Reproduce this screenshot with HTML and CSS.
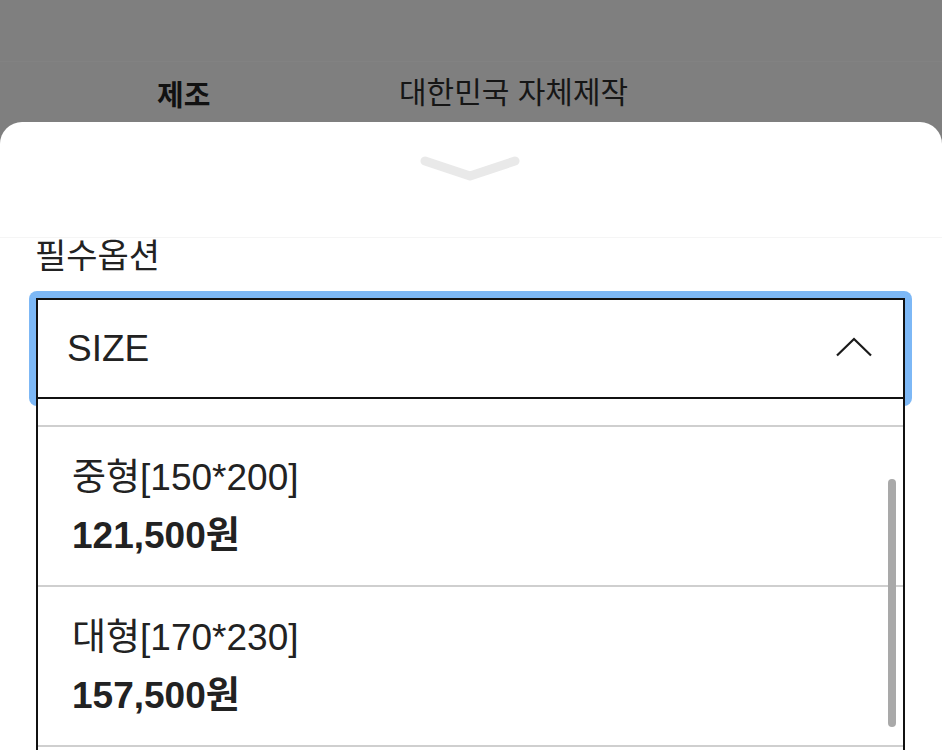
FILE: index.html
```html
<!DOCTYPE html>
<html lang="ko">
<head>
<meta charset="utf-8">
<title>필수옵션</title>
<link rel="stylesheet" href="styles.css">
</head>
<body>
  <div class="backdrop">
    <div class="spec-row">
      <div class="spec-key">제조</div>
      <div class="spec-val">대한민국 자체제작</div>
    </div>
  </div>
  <div class="sheet">
    <div class="sheet-handle">
      <svg class="handle-icon" width="104" height="30" viewBox="0 0 104 30" aria-hidden="true">
        <polyline points="7,6 52,21 97,6" fill="none" stroke="#e9e9e9" stroke-width="9" stroke-linecap="round" stroke-linejoin="round"/>
      </svg>
    </div>
    <div class="sheet-body">
      <div class="field-label">필수옵션</div>
      <div class="select-ring">
        <div class="select">
          <span class="select-text">SIZE</span>
          <svg class="select-caret" width="36" height="20" viewBox="0 0 36 20" aria-hidden="true">
            <polyline points="1,18.5 18,2 35,18.5" fill="none" stroke="#1a1a1a" stroke-width="2.2"/>
          </svg>
        </div>
      </div>
      <div class="options">
        <div class="option-partial"></div>
        <div class="option">
          <div class="option-name">중형[150*200]</div>
          <div class="option-price">121,500원</div>
        </div>
        <div class="option">
          <div class="option-name">대형[170*230]</div>
          <div class="option-price">157,500원</div>
        </div>
        <div class="option-rest"></div>
        <div class="scrollbar"></div>
      </div>
    </div>
  </div>
</body>
</html>
```
FILE: styles.css
```css
html, body {
  margin: 0;
  padding: 0;
}
body {
  width: 942px;
  height: 750px;
  overflow: hidden;
  background: #7f7f7f;
  font-family: "Liberation Sans", "Noto Sans CJK KR", sans-serif;
  color: #222;
}
.backdrop {
  height: 122px;
  box-sizing: border-box;
  padding-top: 61px;
}
.spec-row {
  display: flex;
  align-items: center;
  height: 62px;
  padding-left: 157px;
  border-top: 1px solid #828282;
  box-sizing: border-box;
}
.spec-key {
  width: 242px;
  font-size: 29px;
  font-weight: 700;
  line-height: 36px;
  color: #111;
  padding-top: 6px;
}
.spec-val {
  font-size: 30px;
  line-height: 36px;
  letter-spacing: 0;
  color: #161616;
}
.sheet {
  height: 628px;
  background: #fff;
  border-radius: 22px 22px 0 0;
  overflow: hidden;
}
.sheet-handle {
  height: 116px;
  box-sizing: border-box;
  display: flex;
  justify-content: center;
  align-items: flex-start;
  padding-top: 33px;
  padding-right: 2px;
  border-bottom: 1px solid #f5f5f5;
}
.handle-icon {
  display: block;
}
.sheet-body {
  padding: 0 37px 0 36px;
}
.field-label {
  font-size: 34px;
  line-height: 36px;
  color: #222;
  margin-left: -1px;
}
.select-ring {
  margin: 17px -7px 0;
  padding: 7px;
  background: #7db8f6;
  border-radius: 8px;
}
.select {
  height: 101px;
  box-sizing: border-box;
  border: 2px solid #111;
  background: #fff;
  display: flex;
  align-items: center;
  justify-content: space-between;
  padding: 0 31px 0 29px;
}
.select-text {
  font-size: 37px;
  line-height: 40px;
  color: #222;
}
.select-caret {
  display: block;
  margin-top: -4px;
}
.options {
  position: relative;
  z-index: 1;
  margin-top: -7px;
  background: #fff;
  border-left: 2px solid #111;
  border-right: 2px solid #111;
}
.option-partial {
  height: 26px;
  border-bottom: 2px solid #cfcfcf;
}
.option {
  padding: 22px 30px 20px 34px;
  border-bottom: 2px solid #cfcfcf;
}
.option-rest {
  height: 40px;
}
.option-name {
  font-size: 37px;
  line-height: 58px;
  color: #222;
}
.option-price {
  font-size: 37px;
  line-height: 58px;
  font-weight: 700;
  color: #222;
}
.scrollbar {
  position: absolute;
  top: 80px;
  right: 7px;
  width: 8px;
  height: 248px;
  border-radius: 4px;
  background: #a9a9a9;
}
```
